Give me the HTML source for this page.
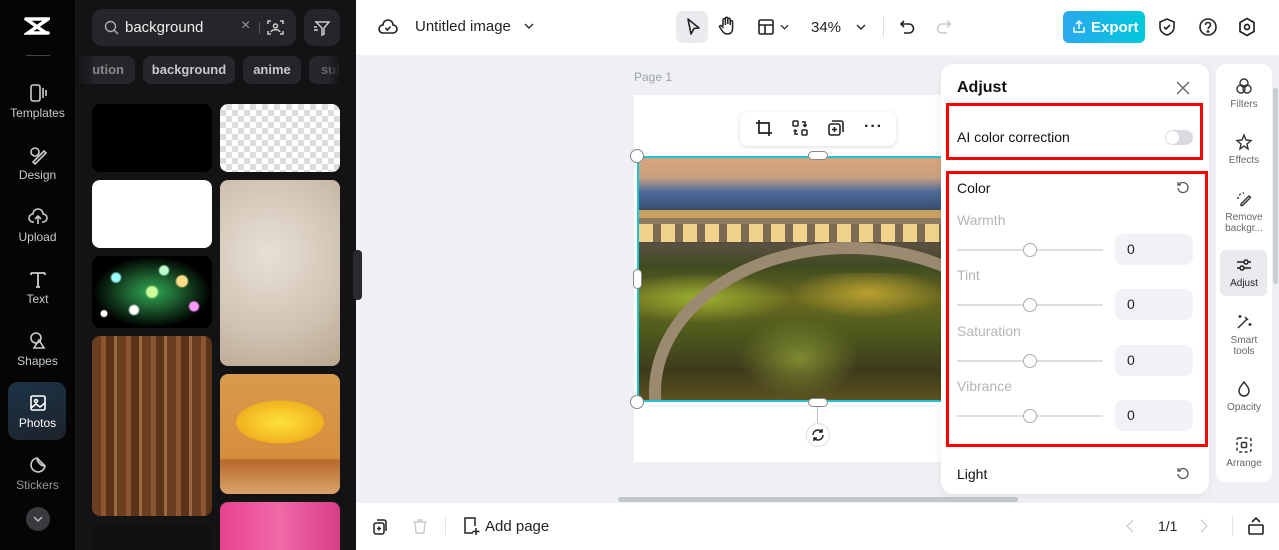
<!DOCTYPE html>
<html><head><meta charset="utf-8"><style>
*{box-sizing:border-box;margin:0;padding:0}
html,body{width:1279px;height:550px;overflow:hidden}
body{font-family:"Liberation Sans",sans-serif;background:#eef0f3;position:relative}
.abs{position:absolute}
.rail{left:0;top:0;width:75px;height:550px;background:#050505}
.rail .it{position:absolute;left:0;width:75px;text-align:center;color:#c9c9cc;font-size:12px}
.rail .it svg{display:block;margin:0 auto 3px}
.panel{left:75px;top:0;width:281px;height:550px;background:#131316;overflow:hidden}
.chip{position:absolute;top:56px;height:28px;border-radius:8px;background:#26262a;color:#c8c8cc;font-size:13px;font-weight:bold;line-height:28px;text-align:center}
.th{position:absolute;border-radius:8px;overflow:hidden}
.top{left:356px;top:0;width:923px;height:55px;background:#fff}
.bot{left:356px;top:503px;width:923px;height:47px;background:#fff}
.ic{position:absolute}
.adj{left:941px;top:64px;width:268px;height:430px;background:#fff;border-radius:12px;box-shadow:0 2px 10px rgba(0,0,0,.06)}
.lbl{position:absolute;left:16px;color:#b3b5b9;font-size:14px}
.track{position:absolute;left:16px;width:146px;height:2px;background:#dcdee2}
.knob{position:absolute;left:82px;width:14px;height:14px;border-radius:50%;background:#fff;border:1px solid #a9acb1}
.val{position:absolute;left:174px;width:78px;height:31px;border-radius:8px;background:#f0f2f5;font-size:14px;color:#222;line-height:31px;padding-left:12px}
.tools{left:1216px;top:64px;width:56px;height:418px;background:#fff;border-radius:10px}
.tools .t{position:absolute;left:0;width:56px;text-align:center;font-size:10px;color:#666;line-height:11px}
.tools .t svg{display:block;margin:0 auto 4px}
</style></head><body>
<div class="abs rail">
 <svg class="abs" style="left:24px;top:16px" width="26" height="20" viewBox="0 0 26 20"><path d="M2 3h22L4 17h20M2 3l20 14" stroke="#fff" stroke-width="3.5" fill="none" stroke-linecap="round"/></svg>
 <div class="abs" style="left:26px;top:55px;width:24px;height:1px;background:#444"></div>
 <div class="it" style="top:83px"><svg width="20" height="20" viewBox="0 0 20 20" fill="none" stroke="#ccc" stroke-width="1.6"><rect x="3" y="2" width="9" height="16" rx="2"/><path d="M15 5v10M18 7v6"/></svg>Templates</div>
 <div class="it" style="top:145px"><svg width="20" height="20" viewBox="0 0 20 20" fill="none" stroke="#ccc" stroke-width="1.6"><circle cx="7" cy="7" r="4"/><path d="M5 17l11-11 2 2-11 11z"/></svg>Design</div>
 <div class="it" style="top:207px"><svg width="20" height="20" viewBox="0 0 20 20" fill="none" stroke="#ccc" stroke-width="1.6"><path d="M6 15H5a4 4 0 010-8 5 5 0 0110 0 4 4 0 010 8h-1M10 17V9M7 12l3-3 3 3"/></svg>Upload</div>
 <div class="it" style="top:269px"><svg width="20" height="20" viewBox="0 0 20 20" fill="none" stroke="#ccc" stroke-width="1.8"><path d="M3 4h14M10 4v14M3 4v2M17 4v2M8 18h4"/></svg>Text</div>
 <div class="it" style="top:331px"><svg width="20" height="20" viewBox="0 0 20 20" fill="none" stroke="#ccc" stroke-width="1.6"><circle cx="8" cy="7" r="5"/><path d="M11 9l5 8H6z"/></svg>Shapes</div>
 <div class="abs" style="left:8px;top:382px;width:58px;height:58px;border-radius:10px;background:linear-gradient(160deg,#1c3347,#1d232b)"></div>
 <div class="it" style="top:393px;color:#fff"><svg width="20" height="20" viewBox="0 0 20 20" fill="none" stroke="#fff" stroke-width="1.6"><rect x="3" y="3" width="14" height="14" rx="1.5"/><circle cx="8" cy="8" r="1.5"/><path d="M3 15l5-4 4 3 5-4"/></svg>Photos</div>
 <div class="it" style="top:455px;color:#999"><svg width="20" height="20" viewBox="0 0 20 20" fill="none" stroke="#ccc" stroke-width="1.6"><path d="M17 11A7 7 0 119 3c0 4 4 8 8 8zM9 3l8 8"/></svg>Stickers</div>
 <div class="abs" style="left:26px;top:507px;width:24px;height:24px;border-radius:50%;background:#3a3a3e"><svg style="position:absolute;left:7px;top:9px" width="10" height="6" viewBox="0 0 10 6"><path d="M1 1l4 4 4-4" stroke="#bbb" fill="none" stroke-width="1.5"/></svg></div>
</div>
<div class="abs panel">
 <div class="abs" style="left:17px;top:9px;width:204px;height:37px;border-radius:10px;background:#26262a"></div>
 <svg class="abs" style="left:29px;top:20px" width="15" height="15" viewBox="0 0 15 15" fill="none" stroke="#aaa" stroke-width="1.4"><circle cx="6.5" cy="6.5" r="5"/><path d="M10 10l4 4"/></svg>
 <div class="abs" style="left:50px;top:19px;color:#eee;font-size:15px">background</div>
 <div class="abs" style="left:166px;top:17px;color:#999;font-size:16px">×</div>
 <div class="abs" style="left:184px;top:22px;width:1px;height:12px;background:#555"></div>
 <svg class="abs" style="left:192px;top:19px" width="17" height="17" viewBox="0 0 17 17" fill="none" stroke="#ccc" stroke-width="1.5"><path d="M1 5V2h3M13 2h3v3M16 12v3h-3M4 15H1v-3"/><circle cx="8.5" cy="7" r="2"/><path d="M4 13c1-3 8-3 9 0"/></svg>
 <div class="abs" style="left:229px;top:9px;width:36px;height:37px;border-radius:10px;background:#26262a"></div>
 <svg class="abs" style="left:238px;top:19px" width="18" height="18" viewBox="0 0 18 18" fill="none" stroke="#ccc" stroke-width="1.5"><path d="M3 3h13l-5 6v6l-2 1V9z"/><path d="M1 8h3M1 11h4"/></svg>
 <div class="chip" style="left:-10px;width:70px;text-align:right;padding-right:11px;color:#888">ution</div>
 <div class="chip" style="left:68px;width:92px">background</div>
 <div class="chip" style="left:168px;width:58px">anime</div>
 <div class="chip" style="left:234px;width:40px;color:#666;text-align:left;padding-left:12px">sul</div>
 <div class="abs" style="left:0;top:56px;width:17px;height:28px;background:linear-gradient(90deg,#131316,rgba(19,19,22,.3))"></div>
 <div class="abs" style="left:255px;top:56px;width:26px;height:28px;background:linear-gradient(90deg,rgba(19,19,22,.2),#131316 40%)"></div>
 <div class="th" style="left:17px;top:104px;width:120px;height:68px;background:#000"></div>
 <div class="th" style="left:145px;top:104px;width:120px;height:68px;background-color:#fff;background-image:linear-gradient(45deg,#ddd 25%,transparent 25%,transparent 75%,#ddd 75%),linear-gradient(45deg,#ddd 25%,transparent 25%,transparent 75%,#ddd 75%);background-size:12px 12px;background-position:0 0,6px 6px"></div>
 <div class="th" style="left:17px;top:180px;width:120px;height:68px;background:#fff"></div>
 <div class="th" style="left:145px;top:180px;width:120px;height:186px;background:radial-gradient(circle at 40% 40%,#e8e0d6,#cfc2b1 60%,#b9a78f)"></div>
 <div class="th" style="left:17px;top:256px;width:120px;height:72px;background:radial-gradient(circle at 20% 30%,#9ff 0 4px,transparent 6px),radial-gradient(circle at 50% 50%,#cf9 0 5px,transparent 7px),radial-gradient(circle at 75% 35%,#fd8 0 5px,transparent 7px),radial-gradient(circle at 35% 75%,#fff 0 4px,transparent 6px),radial-gradient(circle at 85% 70%,#f9f 0 4px,transparent 6px),radial-gradient(circle at 10% 80%,#fff 0 3px,transparent 4px),radial-gradient(circle at 60% 20%,#bfc 0 4px,transparent 6px),radial-gradient(ellipse at 50% 50%,#3a5 0,#000 70%)"></div>
 <div class="th" style="left:17px;top:336px;width:120px;height:180px;background:repeating-linear-gradient(90deg,#6b3e1f 0 9px,#8a5530 9px 14px,#5a3318 14px 22px,#9a6a40 22px 25px)"></div>
 <div class="th" style="left:145px;top:374px;width:120px;height:120px;background:radial-gradient(ellipse 45% 22% at 50% 40%,#ffe23a,#f0b21e 80%,transparent 82%),linear-gradient(#d99a4e,#d68e3c 70%,#b86a2a 72%,#d9a36b)"></div>
 <div class="th" style="left:17px;top:524px;width:120px;height:40px;background:#111"></div>
 <div class="th" style="left:145px;top:502px;width:120px;height:60px;background:linear-gradient(90deg,#e8418f,#f06aa8,#d83c86)"></div>
</div>
<div class="abs" style="left:353px;top:250px;width:9px;height:50px;border-radius:4px;background:#2a2a2e"></div>
<div class="abs top">
 <svg class="ic" style="left:22px;top:17px" width="20" height="20" viewBox="0 0 20 20" fill="none" stroke="#222" stroke-width="1.6"><path d="M6 16H5a4 4 0 010-8 5 5 0 0110 0 4 4 0 010 8H6z"/><path d="M7.5 11l2 2 3-3.5"/></svg>
 <div class="abs" style="left:59px;top:18px;font-size:15px;color:#222">Untitled image</div>
 <svg class="ic" style="left:168px;top:23px" width="10" height="6" viewBox="0 0 10 6"><path d="M1 1l4 4 4-4" stroke="#333" fill="none" stroke-width="1.5"/></svg>
 <div class="abs" style="left:320px;top:11px;width:32px;height:32px;border-radius:7px;background:#e9ebee"></div>
 <svg class="ic" style="left:328px;top:17px" width="18" height="20" viewBox="0 0 18 20"><path d="M4 2l11 9-5 .5L7 17z" stroke="#222" fill="none" stroke-width="1.6" stroke-linejoin="round"/></svg>
 <svg class="ic" style="left:362px;top:16px" width="18" height="20" viewBox="0 0 18 20" fill="none" stroke="#222" stroke-width="1.5"><path d="M5 10V4a1.2 1.2 0 012.4 0v5M7.4 8V2.5a1.2 1.2 0 012.4 0V8M9.8 8V3.5a1.2 1.2 0 012.4 0V9M12.2 9V6a1.2 1.2 0 012.4 0v6c0 4-2 6-5 6s-4-1-6-4l-2-3c-.5-1 1-2 2-1l2 2"/></svg>
 <svg class="ic" style="left:401px;top:18px" width="18" height="18" viewBox="0 0 18 18" fill="none" stroke="#222" stroke-width="1.6"><rect x="2" y="2" width="14" height="14" rx="1.5"/><path d="M2 7h14M8 7v9"/></svg>
 <svg class="ic" style="left:424px;top:24px" width="9" height="6" viewBox="0 0 10 6"><path d="M1 1l4 4 4-4" stroke="#333" fill="none" stroke-width="1.5"/></svg>
 <div class="abs" style="left:455px;top:19px;font-size:15px;color:#222">34%</div>
 <svg class="ic" style="left:500px;top:24px" width="10" height="6" viewBox="0 0 10 6"><path d="M1 1l4 4 4-4" stroke="#333" fill="none" stroke-width="1.5"/></svg>
 <div class="abs" style="left:527px;top:17px;width:1px;height:20px;background:#ddd"></div>
 <svg class="ic" style="left:543px;top:18px" width="18" height="18" viewBox="0 0 18 18" fill="none" stroke="#222" stroke-width="1.6"><path d="M5 3L2 6l3 3M2 6h8a4.5 4.5 0 010 9H5"/></svg>
 <svg class="ic" style="left:578px;top:18px" width="18" height="18" viewBox="0 0 18 18" fill="none" stroke="#ccc" stroke-width="1.6"><path d="M13 3l3 3-3 3M16 6H8a4.5 4.5 0 000 9h5"/></svg>
 <div class="abs" style="left:707px;top:11px;width:82px;height:32px;border-radius:6px;background:linear-gradient(90deg,#2ba8ef,#00c8dc)"></div>
 <svg class="ic" style="left:716px;top:19px" width="14" height="15" viewBox="0 0 14 15" fill="none" stroke="#fff" stroke-width="1.4"><path d="M7 10V2M4 5l3-3 3 3M2 8v5h10V8"/></svg>
 <div class="abs" style="left:735px;top:19px;font-size:15px;color:#fff;font-weight:bold">Export</div>
 <svg class="ic" style="left:802px;top:17px" width="18" height="20" viewBox="0 0 18 20" fill="none" stroke="#222" stroke-width="1.6"><path d="M9 2l7 3v5c0 4-3 7-7 8-4-1-7-4-7-8V5z"/><path d="M6 10l2 2 4-4"/></svg>
 <svg class="ic" style="left:842px;top:17px" width="20" height="20" viewBox="0 0 20 20" fill="none" stroke="#222" stroke-width="1.6"><circle cx="10" cy="10" r="8"/><path d="M7.5 8a2.5 2.5 0 115 0c0 2-2.5 2-2.5 4"/><circle cx="10" cy="14.5" r=".6" fill="#222"/></svg>
 <svg class="ic" style="left:882px;top:17px" width="18" height="20" viewBox="0 0 18 20" fill="none" stroke="#222" stroke-width="1.7"><path d="M9 1.5l7 4v9l-7 4-7-4v-9z"/><circle cx="9" cy="10" r="2.5"/></svg>
</div>
<div class="abs" style="left:634px;top:70px;font-size:12px;color:#a0a4aa">Page 1</div>
<div class="abs" style="left:634px;top:95px;width:310px;height:367px;background:#fff"></div>
<div class="abs" style="left:740px;top:112px;width:156px;height:34px;border-radius:8px;background:#fff;box-shadow:0 1px 5px rgba(0,0,0,.15)"></div>
<svg class="ic" style="left:755px;top:119px" width="18" height="18" viewBox="0 0 18 18" fill="none" stroke="#222" stroke-width="1.7"><path d="M4 1v13h13M1 4h13v13"/></svg>
<svg class="ic" style="left:791px;top:119px" width="18" height="18" viewBox="0 0 18 18" fill="none" stroke="#222" stroke-width="1.5"><rect x="2" y="2" width="5" height="5" rx="1"/><rect x="11" y="11" width="5" height="5" rx="1"/><path d="M11 3h3v4M7 15H4v-4M12 6l2 1.5 1.5-2M3 12.5L4 11l2 1.5"/></svg>
<svg class="ic" style="left:827px;top:119px" width="18" height="18" viewBox="0 0 18 18" fill="none" stroke="#222" stroke-width="1.6"><rect x="2" y="5" width="11" height="11" rx="2"/><path d="M5 2h9a2 2 0 012 2v9M7.5 8v5M5 10.5h5"/></svg>
<div class="abs" style="left:864px;top:118px;font-size:16px;color:#222;font-weight:bold;letter-spacing:1px">···</div>
<div class="abs" style="left:637px;top:156px;width:305px;height:246px;border:2px solid #1fc3d6;border-right:none;overflow:hidden;background:linear-gradient(180deg,#d9a57e 0%,#c9a080 8%,#4f6a98 14%,#3b5478 20%,#2e3a2c 26%,#2e3a2c 30%,#5a5040 36%,#3f4a20 45%,#6c6a20 58%,#4e5a1c 72%,#3e3a1c 88%,#5b5320 100%)">
 <div class="abs" style="left:0;top:115px;width:305px;height:50px;background:radial-gradient(ellipse 30% 50% at 20% 50%,#9ab030,transparent),radial-gradient(ellipse 25% 50% at 75% 40%,#b8a030,transparent)"></div>
 <div class="abs" style="left:0;top:52px;width:305px;height:8px;background:#c8a262"></div>
 <div class="abs" style="left:0;top:60px;width:305px;height:6px;background:#8e7c62"></div>
 <div class="abs" style="left:0;top:66px;width:305px;height:18px;background:repeating-linear-gradient(90deg,#f0d28a 0 14px,#7c6a52 14px 22px)"></div>
 <div class="abs" style="left:10px;top:84px;width:400px;height:300px;border-radius:50%;border:12px solid #9c8a70;border-bottom:none"></div>
 <div class="abs" style="left:100px;top:160px;width:120px;height:80px;background:radial-gradient(ellipse,#7e8a30,transparent 70%)"></div>
</div>
<div class="abs" style="left:630px;top:149px;width:14px;height:14px;border-radius:50%;background:#fff;border:1px solid #888"></div>
<div class="abs" style="left:630px;top:395px;width:14px;height:14px;border-radius:50%;background:#fff;border:1px solid #888"></div>
<div class="abs" style="left:808px;top:151px;width:20px;height:9px;border-radius:5px;background:#fff;border:1px solid #888"></div>
<div class="abs" style="left:808px;top:398px;width:20px;height:9px;border-radius:5px;background:#fff;border:1px solid #888"></div>
<div class="abs" style="left:633px;top:269px;width:9px;height:20px;border-radius:5px;background:#fff;border:1px solid #888"></div>
<div class="abs" style="left:817px;top:407px;width:1px;height:16px;background:#bbb"></div>
<div class="abs" style="left:806px;top:423px;width:24px;height:24px;border-radius:50%;background:#fff;border:1px solid #ddd"></div>
<svg class="ic" style="left:811px;top:428px" width="14" height="14" viewBox="0 0 14 14" fill="none" stroke="#222" stroke-width="1.5"><path d="M2 7a5 5 0 019-3M12 7a5 5 0 01-9 3M11 1v3H8M3 13v-3h3"/></svg>
<div class="abs" style="left:618px;top:497px;width:400px;height:5px;border-radius:3px;background:#c3c6cb"></div>
<div class="abs" style="left:1273px;top:88px;width:5px;height:196px;border-radius:3px;background:#c9ccd0"></div>
<div class="abs adj">
 <div class="abs" style="left:16px;top:15px;font-size:16px;font-weight:bold;color:#111">Adjust</div>
 <svg class="ic" style="left:235px;top:17px" width="14" height="14" viewBox="0 0 14 14" stroke="#666" stroke-width="1.4"><path d="M1 1l12 12M13 1L1 13"/></svg>
 <div class="abs" style="left:16px;top:65px;font-size:14px;color:#111">AI color correction</div>
 <div class="abs" style="left:224px;top:66px;width:28px;height:15px;border-radius:8px;background:#d9dbdf"></div>
 <div class="abs" style="left:225px;top:67px;width:13px;height:13px;border-radius:50%;background:#fff"></div>
 <div class="abs" style="left:16px;top:116px;font-size:14px;color:#111">Color</div>
 <svg class="ic" style="left:235px;top:117px" width="14" height="14" viewBox="0 0 14 14" fill="none" stroke="#555" stroke-width="1.3"><path d="M3 3.5A5 5 0 112 7M2 1v3h3"/></svg>
 <div class="lbl" style="top:148px">Warmth</div><div class="track" style="top:185px"></div><div class="knob" style="top:179px"></div><div class="val" style="top:170px">0</div>
 <div class="lbl" style="top:203px">Tint</div><div class="track" style="top:240px"></div><div class="knob" style="top:234px"></div><div class="val" style="top:225px">0</div>
 <div class="lbl" style="top:259px">Saturation</div><div class="track" style="top:296px"></div><div class="knob" style="top:290px"></div><div class="val" style="top:281px">0</div>
 <div class="lbl" style="top:314px">Vibrance</div><div class="track" style="top:351px"></div><div class="knob" style="top:345px"></div><div class="val" style="top:336px">0</div>
 <div class="abs" style="left:16px;top:402px;font-size:14px;color:#111">Light</div>
 <svg class="ic" style="left:235px;top:403px" width="14" height="14" viewBox="0 0 14 14" fill="none" stroke="#555" stroke-width="1.3"><path d="M3 3.5A5 5 0 112 7M2 1v3h3"/></svg>
</div>
<div class="abs" style="left:946px;top:103px;width:257px;height:57px;border:3px solid #f00"></div>
<div class="abs" style="left:946px;top:171px;width:262px;height:276px;border:3px solid #f00"></div>
<div class="abs tools">
 <div class="t" style="top:13px"><svg width="18" height="18" viewBox="0 0 18 18" fill="none" stroke="#333" stroke-width="1.4"><circle cx="9" cy="6" r="4"/><circle cx="6" cy="12" r="4"/><circle cx="12" cy="12" r="4"/></svg>Filters</div>
 <div class="t" style="top:69px"><svg width="18" height="18" viewBox="0 0 18 18" fill="none" stroke="#333" stroke-width="1.4"><path d="M9 2l2 5 5 .5-4 3.5 1 5-4-3-4 3 1-5-4-3.5 5-.5z"/></svg>Effects</div>
 <div class="t" style="top:126px"><svg width="18" height="18" viewBox="0 0 18 18" fill="none" stroke="#333" stroke-width="1.4"><path d="M6 14l8-8 1.5 1.5-8 8H6z" /><path d="M3 9a6 6 0 016-6" stroke-dasharray="2 2"/></svg>Remove<br>backgr...</div>
 <div class="abs" style="left:4px;top:186px;width:47px;height:46px;border-radius:6px;background:#e8eaed"></div>
 <div class="t" style="top:192px;color:#222"><svg width="18" height="18" viewBox="0 0 18 18" fill="none" stroke="#222" stroke-width="1.5"><path d="M2 6h14M2 12h14"/><circle cx="11" cy="6" r="2" fill="#e8eaed"/><circle cx="7" cy="12" r="2" fill="#e8eaed"/></svg>Adjust</div>
 <div class="t" style="top:249px"><svg width="18" height="18" viewBox="0 0 18 18" fill="none" stroke="#333" stroke-width="1.5"><path d="M3 15l9-9M10 4l3 3M5 2v3M3.5 3.5h3M15 10v3M13.5 11.5h3"/></svg>Smart<br>tools</div>
 <div class="t" style="top:316px"><svg width="18" height="18" viewBox="0 0 18 18" fill="none" stroke="#333" stroke-width="1.5"><path d="M9 2c3 4 5 6 5 9a5 5 0 01-10 0c0-3 2-5 5-9z"/></svg>Opacity</div>
 <div class="t" style="top:372px"><svg width="18" height="18" viewBox="0 0 18 18" fill="none" stroke="#333" stroke-width="1.5"><rect x="2" y="2" width="14" height="14" rx="2" stroke-dasharray="3 2.5"/><rect x="6.5" y="6.5" width="5" height="5" rx="1"/></svg>Arrange</div>
</div>
<div class="abs bot">
 <svg class="ic" style="left:16px;top:15px" width="16" height="18" viewBox="0 0 16 18" fill="none" stroke="#222" stroke-width="1.5"><rect x="2" y="5" width="10" height="11" rx="2"/><path d="M5 2h7a2 2 0 012 2v9M7 8.5v4M5 10.5h4"/></svg>
 <svg class="ic" style="left:56px;top:14px" width="16" height="18" viewBox="0 0 16 18" fill="none" stroke="#ccc" stroke-width="1.4"><path d="M3 5h10l-1 11H4zM1 5h14M6 5V3h4v2"/></svg>
 <div class="abs" style="left:89px;top:14px;width:1px;height:18px;background:#e3e3e3"></div>
 <svg class="ic" style="left:106px;top:13px" width="18" height="20" viewBox="0 0 18 20" fill="none" stroke="#222" stroke-width="1.5"><path d="M11 17H3V2h10v8M14 12v7M10.5 15.5h7"/></svg>
 <div class="abs" style="left:129px;top:15px;font-size:15px;color:#222">Add page</div>
 <svg class="ic" style="left:770px;top:16px" width="8" height="14" viewBox="0 0 8 14"><path d="M7 1L1 7l6 6" stroke="#ccc" fill="none" stroke-width="1.3"/></svg>
 <div class="abs" style="left:802px;top:15px;font-size:14px;color:#222">1/1</div>
 <svg class="ic" style="left:844px;top:16px" width="8" height="14" viewBox="0 0 8 14"><path d="M1 1l6 6-6 6" stroke="#ccc" fill="none" stroke-width="1.3"/></svg>
 <div class="abs" style="left:876px;top:13px;width:1px;height:20px;background:#e3e3e3"></div>
 <svg class="ic" style="left:891px;top:13px" width="18" height="20" viewBox="0 0 18 20" fill="none" stroke="#222" stroke-width="1.6"><rect x="2" y="9" width="14" height="9" rx="1"/><path d="M5 6l4-4 4 4"/></svg>
</div>
</body></html>
